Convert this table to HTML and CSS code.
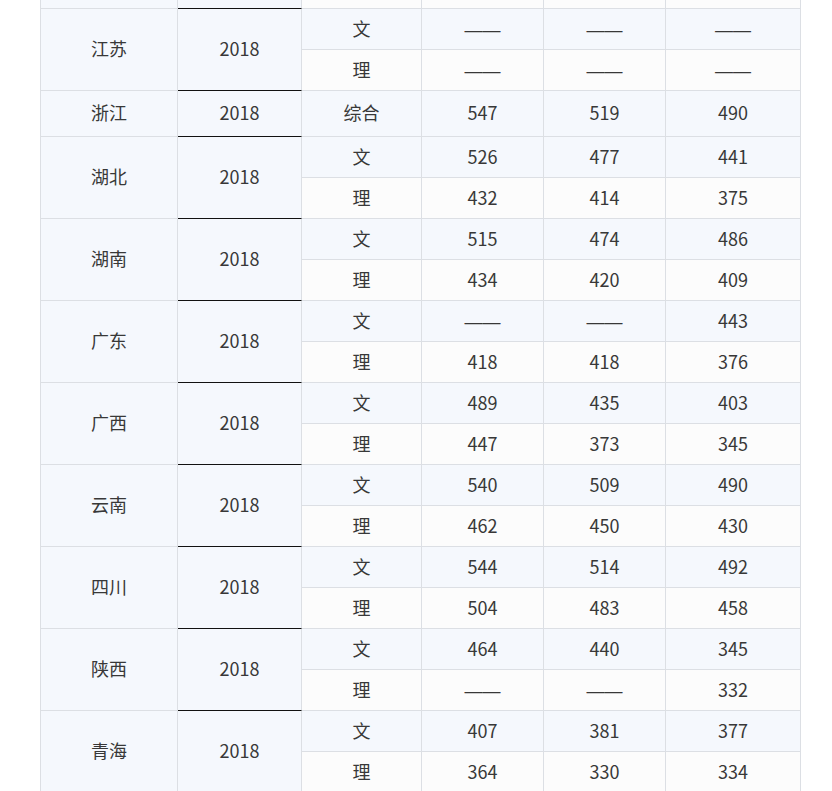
FILE: index.html
```html
<!DOCTYPE html>
<html lang="zh-CN">
<head>
<meta charset="utf-8">
<title>分数线</title>
<link rel="stylesheet" href="styles.css">
</head>
<body>
<table class="score-table">
  <colgroup>
    <col class="c-prov"><col class="c-year"><col class="c-type"><col class="c-v1"><col class="c-v2"><col class="c-v3">
  </colgroup>
  <tbody>
    <tr class="row-partial even">
      <td class="prov"></td><td class="year"></td><td></td><td></td><td></td><td></td>
    </tr>

    <tr class="odd"><td class="prov" rowspan="2">江苏</td><td class="year" rowspan="2">2018</td><td>文</td><td><span class="dash">——</span></td><td><span class="dash">——</span></td><td><span class="dash">——</span></td></tr>
    <tr class="even"><td>理</td><td><span class="dash">——</span></td><td><span class="dash">——</span></td><td><span class="dash">——</span></td></tr>

    <tr class="odd single"><td class="prov">浙江</td><td class="year">2018</td><td>综合</td><td>547</td><td>519</td><td>490</td></tr>

    <tr class="odd"><td class="prov" rowspan="2">湖北</td><td class="year" rowspan="2">2018</td><td>文</td><td>526</td><td>477</td><td>441</td></tr>
    <tr class="even"><td>理</td><td>432</td><td>414</td><td>375</td></tr>

    <tr class="odd"><td class="prov" rowspan="2">湖南</td><td class="year" rowspan="2">2018</td><td>文</td><td>515</td><td>474</td><td>486</td></tr>
    <tr class="even"><td>理</td><td>434</td><td>420</td><td>409</td></tr>

    <tr class="odd"><td class="prov" rowspan="2">广东</td><td class="year" rowspan="2">2018</td><td>文</td><td><span class="dash">——</span></td><td><span class="dash">——</span></td><td>443</td></tr>
    <tr class="even"><td>理</td><td>418</td><td>418</td><td>376</td></tr>

    <tr class="odd"><td class="prov" rowspan="2">广西</td><td class="year" rowspan="2">2018</td><td>文</td><td>489</td><td>435</td><td>403</td></tr>
    <tr class="even"><td>理</td><td>447</td><td>373</td><td>345</td></tr>

    <tr class="odd"><td class="prov" rowspan="2">云南</td><td class="year" rowspan="2">2018</td><td>文</td><td>540</td><td>509</td><td>490</td></tr>
    <tr class="even"><td>理</td><td>462</td><td>450</td><td>430</td></tr>

    <tr class="odd"><td class="prov" rowspan="2">四川</td><td class="year" rowspan="2">2018</td><td>文</td><td>544</td><td>514</td><td>492</td></tr>
    <tr class="even"><td>理</td><td>504</td><td>483</td><td>458</td></tr>

    <tr class="odd"><td class="prov" rowspan="2">陕西</td><td class="year" rowspan="2">2018</td><td>文</td><td>464</td><td>440</td><td>345</td></tr>
    <tr class="even"><td>理</td><td><span class="dash">——</span></td><td><span class="dash">——</span></td><td>332</td></tr>

    <tr class="odd"><td class="prov" rowspan="2">青海</td><td class="year" rowspan="2">2018</td><td>文</td><td>407</td><td>381</td><td>377</td></tr>
    <tr class="even"><td>理</td><td>364</td><td>330</td><td>334</td></tr>
  </tbody>
</table>
</body>
</html>
```

FILE: styles.css
```css
html, body {
  margin: 0;
  padding: 0;
  background: #ffffff;
}

body {
  padding-left: 40px;
  font-family: "Noto Sans CJK SC", "Noto Sans", sans-serif;
  font-size: 18px;
  color: #383838;
}

.score-table {
  border-collapse: separate;
  border-spacing: 0;
  table-layout: fixed;
  width: 761px;
  border-left: 1px solid #dcdfe4;
}

.c-prov { width: 137px; }
.c-year { width: 124px; }
.c-type { width: 120px; }
.c-v1 { width: 122px; }
.c-v2 { width: 122px; }
.c-v3 { width: 135px; }

.score-table td {
  box-sizing: border-box;
  height: 41px;
  padding: 0 0 3px 0;
  text-align: center;
  vertical-align: middle;
  line-height: 20px;
  border-right: 1px solid #dcdfe4;
  border-bottom: 1px solid #dcdfe4;
}

.score-table tr.single td {
  height: 46px;
}

.score-table tr.row-partial td {
  height: 9px;
  padding: 0;
  line-height: 8px;
}

.dash {
  font-family: "Liberation Sans", sans-serif;
  font-size: 18px;
  letter-spacing: 0;
  position: relative;
  top: 1px;
}

.odd td {
  background: #f5f8fd;
}

.even td {
  background: #fcfcfc;
}

.score-table td.prov,
.score-table td.year {
  background: #f5f8fd;
}

.score-table td.year {
  border-bottom: 1px solid #111111;
}
```
